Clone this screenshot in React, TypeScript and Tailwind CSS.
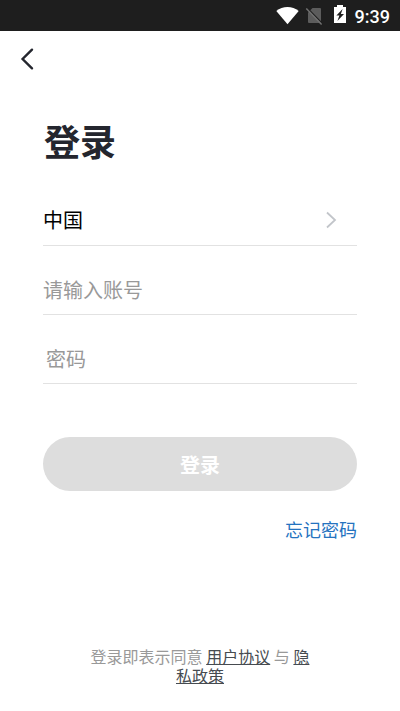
import type { ReactNode } from "react";

function StatusBar() {
  return (
    <div className="flex h-[31px] items-center justify-end bg-[#1e1e1e] pr-[10px] text-white">
      <svg className="h-[31px] w-[79px]" viewBox="276 0 79 31" fill="none">
        <path d="M276.3 11C282.5 5.6 292.5 5.6 298.7 11L287.5 24.3Z" fill="#fff" />
        <path d="M312.5 8H320Q321 8 321 9V22Q321 23 320 23H309Q308 23 308 22V12.5Z" fill="#5c5c5c" />
        <path d="M307.3 8L322.3 23.4" stroke="#1e1e1e" strokeWidth="1.2" />
        <path d="M306.3 8.6L321.6 24.4" stroke="#707070" strokeWidth="1.5" />
        <path d="M337 5H343V7H346V23H334V7H337Z" fill="#fff" />
        <path d="M342.6 9L336.4 15.6H339.4L337.4 21L344 14.1H340.9Z" fill="#1e1e1e" />
      </svg>
      <span className="pt-[2px] font-[Roboto,sans-serif] text-[18px] leading-none font-medium">9:39</span>
    </div>
  );
}

function Row({ children, className = "" }: { children: ReactNode; className?: string }) {
  return (
    <div className={`flex h-[69px] items-center border-b border-[#e2e2e2] text-[20px] leading-[30px] ${className}`}>
      {children}
    </div>
  );
}

export default function App() {
  return (
    <div className="flex h-[711px] w-[400px] flex-col bg-white font-['Noto_Sans_CJK_SC',sans-serif]">
      <StatusBar />

      <header className="flex h-14 items-center pl-5">
        <button type="button" aria-label="返回">
          <svg className="block h-6 w-4" viewBox="0 0 16 24" fill="none">
            <path d="M12 2.7L2.6 12L12 21.3" stroke="#24262e" strokeWidth="2.4" strokeLinecap="round" />
          </svg>
        </button>
      </header>

      <main className="flex flex-col px-[43px]">
        <h1 className="mt-[27px] pl-px text-[36px] leading-[52px] font-bold text-[#24262e]">登录</h1>

        <div className="mt-[11px]">
          <Row className="justify-between pt-[17px] text-black">
            <span>中国</span>
            <svg className="mr-5 h-[18px] w-3" viewBox="0 0 12 18" fill="none">
              <path d="M2 1.5L10 9L2 16.5" stroke="#c2c5ca" strokeWidth="1.8" />
            </svg>
          </Row>
          <Row className="pt-[19px] text-[#999]">请输入账号</Row>
          <Row className="pt-[19px] pl-[3px] text-[#999]">密码</Row>
        </div>

        <button
          type="button"
          className="mt-[53px] h-[54px] rounded-full bg-[#ddd] pt-px text-[20px] leading-[53px] font-bold text-white"
        >
          登录
        </button>

        <a href="#forgot" className="mt-[25px] self-end text-[18px] leading-[26px] text-[#2573bf]">
          忘记密码
        </a>
      </main>

      <footer className="mx-auto mt-auto mb-[26px] w-[224px] text-center text-[16px] leading-[19px] text-[#999]">
        登录即表示同意{" "}
        <a href="#terms" className="text-[#464b50] underline">
          用户协议
        </a>{" "}
        与{" "}
        <a href="#privacy" className="text-[#464b50] underline">
          隐私政策
        </a>
      </footer>
    </div>
  );
}
